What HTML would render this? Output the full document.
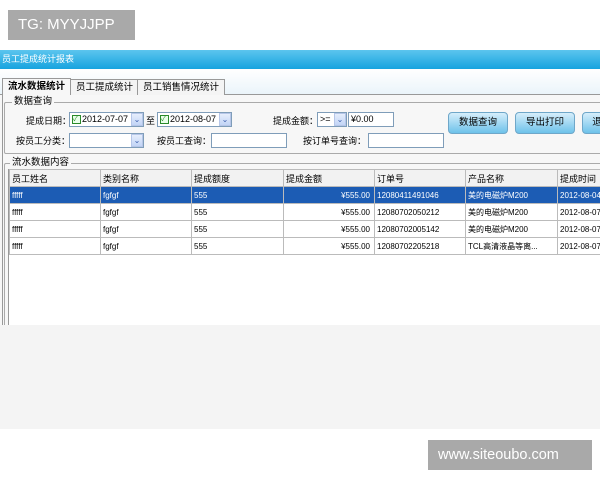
<!DOCTYPE html>
<html><head><meta charset="utf-8"><style>
*{margin:0;padding:0;box-sizing:border-box}
body{width:600px;height:480px;background:#fff;position:relative;overflow:hidden;font-family:"Liberation Sans","Noto Sans CJK SC",sans-serif;font-size:9px;color:#000}
.abs{position:absolute}
.badge{background:#a9a9a9;color:#fff;font-size:15px;line-height:30px;padding-left:10px}
.title{left:0;top:50px;width:600px;height:19px;background:linear-gradient(#5cc5ee,#16a3df);color:#fff;font-size:9px;line-height:19px;padding-left:2px}
.win{left:0;top:69px;width:600px;height:256px;background:#f7f7f7}
.grey{left:0;top:325px;width:600px;height:104px;background:#f4f4f4}
.tab{top:79px;height:16px;border:1px solid #999;border-bottom:none;background:#f4f4f4;line-height:15px;padding:0 5px;font-size:9.5px}
.grp{border:1px solid #aaa;border-radius:2px}
.lg{background:#f7f7f7;padding:0 2px;font-size:9.5px;line-height:10px}
.inp{background:#fff;border:1px solid #7f9db9;height:15px;line-height:13px;padding-left:2px}
.dd{width:12px;height:13px;background:linear-gradient(#e6eefc,#c2d4f6);border:1px solid #b6c6e8;color:#3b5fae;font-size:8px;text-align:center;line-height:11px}
.btn{top:112px;height:22px;border:1px solid #6fa7c9;border-radius:4px;background:linear-gradient(#d6eefb,#6ec2ea);text-align:center;line-height:20px;font-size:9.5px}
table{border-collapse:collapse;position:absolute;left:9px;top:169px;background:#fff;table-layout:fixed;width:608px}
td{border:1px solid #bbb;height:17px;font-size:8px;padding-left:2px;white-space:nowrap;overflow:hidden}
tr.h td{background:#f2f2f2;font-size:9px}
tr.s td{background:#1c5cb4;color:#fff}
.r{text-align:right;padding-right:4px}
.cb{display:inline-block;width:9px;height:9px;border:1px solid #2a8a2a;background:#eaffea;vertical-align:middle;margin-right:1px;font-size:7px;line-height:7px;color:#2a8a2a}
</style></head><body>
<div class="abs badge" style="left:8px;top:10px;width:127px;height:30px">TG: MYYJJPP</div>
<div class="abs title">员工提成统计报表</div>
<div class="abs win"></div>
<div class="abs" style="left:0;top:69px;width:600px;height:26px;background:linear-gradient(#fff,#eaf4fa)"></div>
<div class="abs" style="left:0;top:94px;width:600px;height:1px;background:#999"></div>
<div class="abs tab" style="left:2px;top:78px;height:17px;background:#f7f7f7;font-weight:bold">流水数据统计</div>
<div class="abs tab" style="left:70px">员工提成统计</div>
<div class="abs tab" style="left:137px">员工销售情况统计</div>
<div class="abs" style="left:2px;top:95px;width:1px;height:230px;background:#999"></div>
<div class="abs grp" style="left:4px;top:102px;width:600px;height:52px"></div>
<div class="abs lg" style="left:12px;top:97px">数据查询</div>
<div class="abs" style="left:26px;top:114px">提成日期：</div>
<div class="abs inp" style="left:69px;top:112px;width:75px"><span class="cb">✓</span>2012-07-07</div>
<div class="abs dd" style="left:131px;top:113px">⌄</div>
<div class="abs" style="left:146px;top:114px">至</div>
<div class="abs inp" style="left:157px;top:112px;width:75px"><span class="cb">✓</span>2012-08-07</div>
<div class="abs dd" style="left:219px;top:113px">⌄</div>
<div class="abs" style="left:273px;top:114px">提成金额：</div>
<div class="abs inp" style="left:317px;top:112px;width:30px">&gt;=</div>
<div class="abs dd" style="left:334px;top:113px">⌄</div>
<div class="abs inp" style="left:348px;top:112px;width:46px">¥0.00</div>
<div class="abs" style="left:16px;top:134px">按员工分类：</div>
<div class="abs inp" style="left:69px;top:133px;width:75px"></div>
<div class="abs dd" style="left:131px;top:134px">⌄</div>
<div class="abs" style="left:157px;top:134px">按员工查询：</div>
<div class="abs inp" style="left:211px;top:133px;width:76px"></div>
<div class="abs" style="left:303px;top:134px">按订单号查询：</div>
<div class="abs inp" style="left:368px;top:133px;width:76px"></div>
<div class="abs btn" style="left:448px;width:60px">数据查询</div>
<div class="abs btn" style="left:515px;width:60px">导出打印</div>
<div class="abs btn" style="left:582px;width:30px">退</div>
<div class="abs grp" style="left:4px;top:163px;width:600px;height:164px"></div>
<div class="abs lg" style="left:10px;top:158px">流水数据内容</div>
<div class="abs" style="left:8px;top:169px;width:600px;height:156px;background:#fff;border-left:1px solid #999"></div>
<table>
<colgroup><col style="width:91px"><col style="width:91px"><col style="width:92px"><col style="width:91px"><col style="width:91px"><col style="width:92px"><col style="width:60px"></colgroup>
<tr class="h"><td>员工姓名</td><td>类别名称</td><td>提成额度</td><td>提成金额</td><td>订单号</td><td>产品名称</td><td>提成时间</td></tr>
<tr class="s"><td>fffff</td><td>fgfgf</td><td>555</td><td class="r">¥555.00</td><td>12080411491046</td><td>美的电磁炉M200</td><td>2012-08-04</td></tr>
<tr><td>fffff</td><td>fgfgf</td><td>555</td><td class="r">¥555.00</td><td>12080702050212</td><td>美的电磁炉M200</td><td>2012-08-07</td></tr>
<tr><td>fffff</td><td>fgfgf</td><td>555</td><td class="r">¥555.00</td><td>12080702005142</td><td>美的电磁炉M200</td><td>2012-08-07</td></tr>
<tr><td>fffff</td><td>fgfgf</td><td>555</td><td class="r">¥555.00</td><td>12080702205218</td><td>TCL高清液晶等离...</td><td>2012-08-07</td></tr>
</table>
<div class="abs grey"></div>
<div class="abs badge" style="left:428px;top:440px;width:164px;height:30px;font-size:14.5px">www.siteoubo.com</div>
</body></html>
